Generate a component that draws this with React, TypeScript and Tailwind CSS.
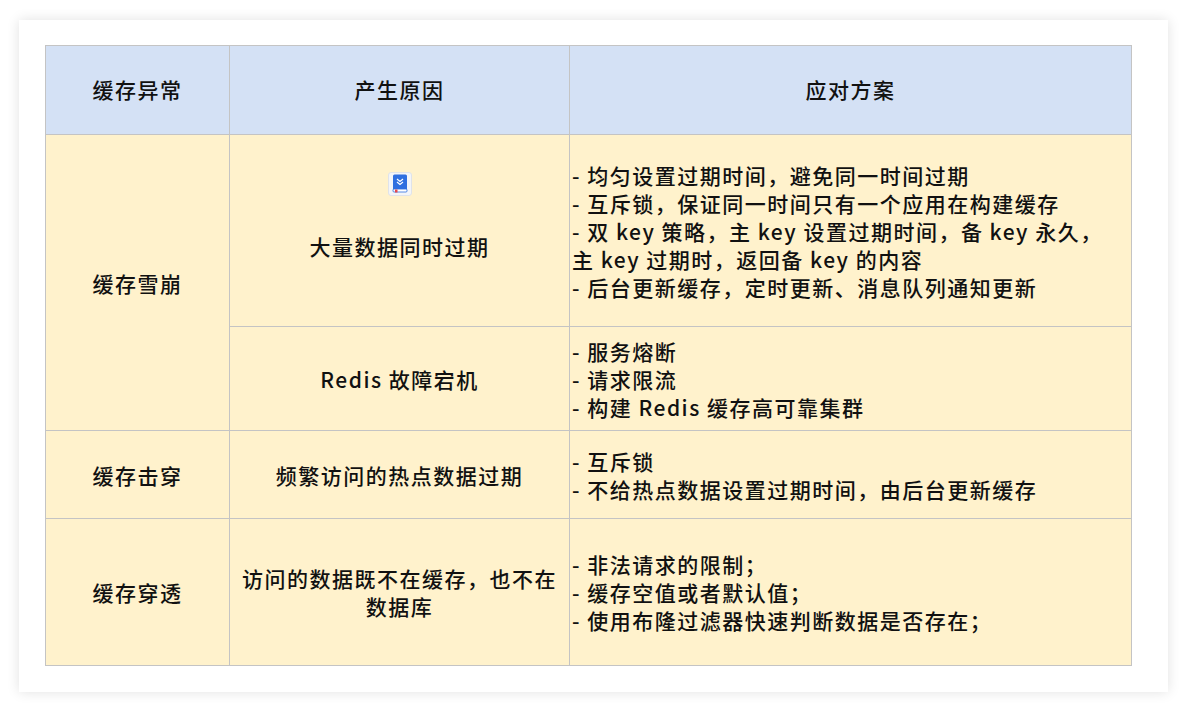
const font = { fontFamily: '"Noto Sans CJK SC", "Liberation Sans", sans-serif' };

function BookIcon() {
  return (
    <span className="inline-flex h-[24px] w-[24px] items-center justify-center rounded-[3px] border border-[#dfe3ea] bg-[#f3f5f9]">
      <svg width="16" height="19" viewBox="0 0 16 19">
        <rect x="1" y="0.5" width="14" height="16" rx="1.5" fill="#2f6fe0" />
        <rect x="1" y="15" width="14" height="3" rx="1" fill="#ffffff" stroke="#2f6fe0" strokeWidth="0.8" />
        <rect x="3" y="15.5" width="2.5" height="3" fill="#e5484d" />
        <path d="M5 5l3 2.5 3-2.5M5 8l3 2.5 3-2.5" stroke="#ffffff" strokeWidth="1.2" fill="none" />
      </svg>
    </span>
  );
}

const td = "border border-[#c4c4c4] bg-[#fff2cc] text-[21px] font-medium tracking-[1.5px] leading-[28px] text-[#111]";

export default function App() {
  return (
    <div className="flex h-[712px] w-[1187px] items-start justify-center bg-white pt-[20px]" style={font}>
      <div className="h-[672px] w-[1149px] bg-white px-[26px] pt-[25px] shadow-[0_0_12px_rgba(0,0,0,0.12)]">
        <table className="border-collapse" style={{ tableLayout: "fixed" }}>
          <colgroup>
            <col style={{ width: 184 }} />
            <col style={{ width: 340 }} />
            <col style={{ width: 562 }} />
          </colgroup>
          <tbody>
            <tr className="h-[89px]">
              {["缓存异常", "产生原因", "应对方案"].map((h) => (
                <td key={h} className="border border-[#c4c4c4] bg-[#d4e1f5] text-center text-[21px] font-medium tracking-[1.5px] text-[#111]">
                  {h}
                </td>
              ))}
            </tr>
            <tr className="h-[192px]">
              <td rowSpan={2} className={`${td} text-center`}>缓存雪崩</td>
              <td className={`${td} text-center`}>
                <div className="flex flex-col items-center gap-[36px]">
                  <BookIcon />
                  <span className="mb-[30px]">大量数据同时过期</span>
                </div>
              </td>
              <td className={`${td} pl-[2px]`}>
                - 均匀设置过期时间，避免同一时间过期<br />
                - 互斥锁，保证同一时间只有一个应用在构建缓存<br />
                - 双 key 策略，主 key 设置过期时间，备 key 永久，<br />主 key 过期时，返回备 key 的内容<br />
                - 后台更新缓存，定时更新、消息队列通知更新
              </td>
            </tr>
            <tr className="h-[104px]">
              <td className={`${td} text-center`}>Redis 故障宕机</td>
              <td className={`${td} pl-[2px]`}>
                - 服务熔断<br />- 请求限流<br />- 构建 Redis 缓存高可靠集群
              </td>
            </tr>
            <tr className="h-[88px]">
              <td className={`${td} text-center`}>缓存击穿</td>
              <td className={`${td} text-center`}>频繁访问的热点数据过期</td>
              <td className={`${td} pl-[2px]`}>
                - 互斥锁<br />- 不给热点数据设置过期时间，由后台更新缓存
              </td>
            </tr>
            <tr className="h-[147px]">
              <td className={`${td} text-center`}>缓存穿透</td>
              <td className={`${td} px-[2px] text-center`}>访问的数据既不在缓存，也不在<br />数据库</td>
              <td className={`${td} pl-[2px]`}>
                - 非法请求的限制；<br />- 缓存空值或者默认值；<br />- 使用布隆过滤器快速判断数据是否存在；
              </td>
            </tr>
          </tbody>
        </table>
      </div>
    </div>
  );
}
